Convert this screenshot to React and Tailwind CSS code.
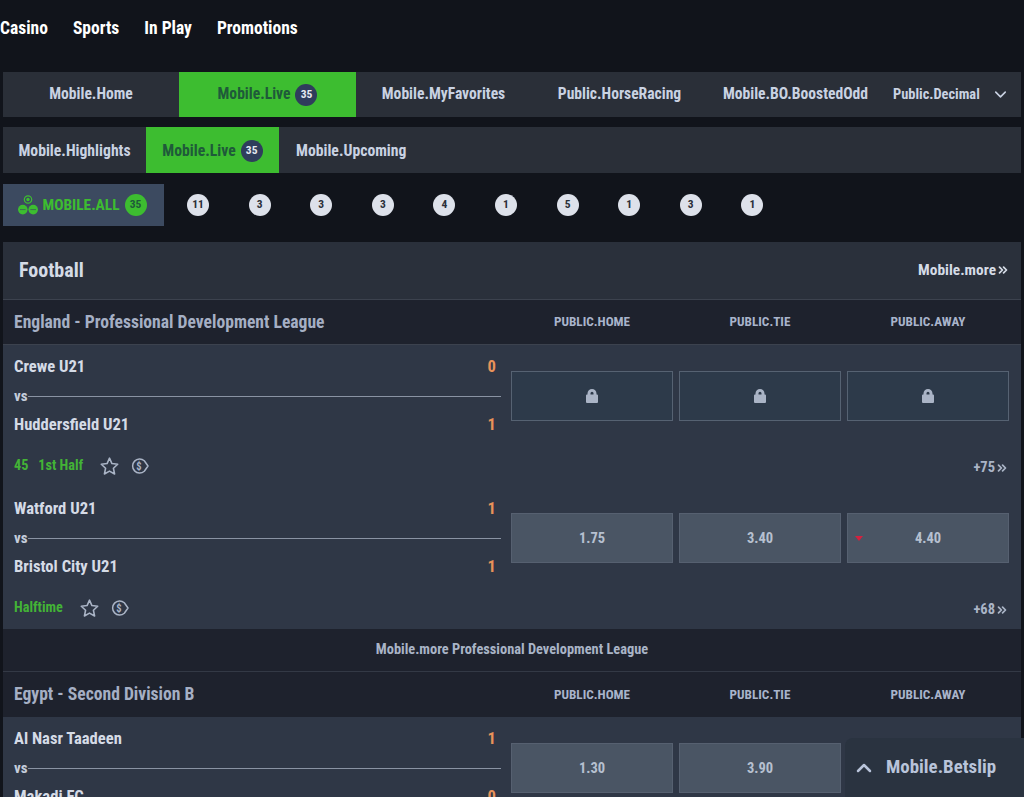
import { ChevronDown, ChevronUp, ChevronsRight } from "lucide-react"

const cond = "font-['Roboto',sans-serif] font-bold [font-stretch:75%]"

function Count() {
    return (
        <span className="w-[22px] h-[22px] rounded-full flex items-center justify-center text-[11.5px] bg-[#2f3d5c] text-[#e4e8f0]">35</span>
    )
}

function Tab({ label, active, count, className }) {
    return (
        <div className={`flex items-center justify-center gap-[5px] ${active ? "bg-[#3dbd30] text-[#1f5a3a]" : "text-[#c9d2e2]"} ${className}`}>
            {label}
            {count && <Count />}
        </div>
    )
}

function Star() {
    return (
        <svg width="19" height="18" viewBox="0 0 24 23" fill="none" stroke="#aab4c6" strokeWidth="2" strokeLinejoin="round">
            <path d="M12 1.5l3.1 6.9 7.4.9-5.5 5.1 1.5 7.3-6.5-3.7-6.5 3.7 1.5-7.3-5.5-5.1 7.4-.9z" />
        </svg>
    )
}

function CashOut() {
    return (
        <svg width="18" height="16" viewBox="0 0 18 16" fill="none" stroke="#aab4c6" strokeWidth="1.5">
            <path d="M13.3 2.8A7 7 0 1 0 13.3 13.2L17 8z" strokeLinejoin="round" />
            <text x="8" y="11.8" textAnchor="middle" fontSize="10.5" fontWeight="700" fill="#aab4c6" stroke="none" fontFamily="Roboto">$</text>
        </svg>
    )
}

function Lock() {
    return (
        <svg width="12" height="14" viewBox="0 0 12 14" fill="#aab4c6">
            <path fillRule="evenodd" d="M1.5 5.5V4.5a4.5 4.5 0 0 1 9 0v1h.5a1 1 0 0 1 1 1V13a1 1 0 0 1-1 1H1a1 1 0 0 1-1-1V6.5a1 1 0 0 1 1-1zm3 0h3V4.2a1.5 1.5 0 0 0-3 0z" />
        </svg>
    )
}

function AllIcon() {
    return (
        <svg width="20" height="20" viewBox="0 0 20 20" fill="#3dbd30">
            <circle cx="10" cy="4.5" r="3.7" fill="none" stroke="#3dbd30" strokeWidth="1.2" />
            <circle cx="10" cy="4.5" r="1.7" />
            <circle cx="4.8" cy="14.6" r="4.8" />
            <circle cx="15.2" cy="14.6" r="4.8" />
            <path d="M2 14.6h5.6M12.4 14.6h5.6" stroke="#3c4a60" strokeWidth="0.7" />
        </svg>
    )
}

function LeagueHeader({ name, height }) {
    return (
        <div className={`${height} shrink-0 bg-[#1e222d] flex items-center`}>
            <div className="flex-1 pl-[11px] text-[17.6px] text-[#a5afc4]">{name}</div>
            <div className="w-[498px] grid grid-cols-3 gap-[6px] text-[13.2px] text-[#a9b4cb] text-center">
                <span>PUBLIC.HOME</span>
                <span>PUBLIC.TIE</span>
                <span>PUBLIC.AWAY</span>
            </div>
            <div className="w-[12px]" />
        </div>
    )
}

function Odd({ value, locked, down }) {
    return (
        <div className={`relative h-[50px] border flex items-center justify-center text-[14.5px] text-[#b6c0d0] ${locked ? "bg-[#2d3a4a] border-[#566272]" : "bg-[#4a5564] border-[#566070]"}`}>
            {locked ? <Lock /> : <span className="mt-[2px]">{value}</span>}
            {down && <span className="absolute left-[7px] top-[22px] w-0 h-0 border-x-[4px] border-x-transparent border-t-[5px] border-t-[#d3213f]" />}
        </div>
    )
}

function Match({ home, away, homeScore, awayScore, status, more, odds, locked, downLast }) {
    return (
        <div className="h-[142px] bg-[#2f3746] flex shrink-0">
            <div className="w-[498px] pl-[11px] pt-[11px]">
                <div className="flex justify-between items-center h-[22px] text-[16.6px] text-[#d5dbe6]">
                    <span>{home}</span>
                    <span className="text-[#e8925a] pr-[5px]">{homeScore}</span>
                </div>
                <div className="flex items-center h-[36px] text-[15px] text-[#c5cddb]">
                    vs
                    <div className="flex-1 h-px bg-[#8a93a3]" />
                </div>
                <div className="flex justify-between items-center h-[22px] text-[16.6px] text-[#d5dbe6]">
                    <span>{away}</span>
                    <span className="text-[#e8925a] pr-[5px]">{awayScore}</span>
                </div>
                <div className="flex items-center mt-[20px] h-[20px] text-[14.2px] text-[#43b336]">
                    {status}
                    <span className="ml-[17px] flex items-center gap-[12px]">
                        <Star />
                        <CashOut />
                    </span>
                </div>
            </div>
            <div className="flex-1 pl-[10px] pr-[12px] pt-[26px]">
                <div className="grid grid-cols-3 gap-[6px]">
                    {odds.map((o, i) => (
                        <Odd key={i} value={o} locked={locked} down={downLast && i === 2} />
                    ))}
                </div>
                <div className="mt-[36px] flex items-center justify-end text-[14.5px] text-[#aab4c6]">
                    {more}
                    <ChevronsRight size={14} strokeWidth={3} />
                </div>
            </div>
        </div>
    )
}

export default function App() {
    const sportCounts = [11, 3, 3, 3, 4, 1, 5, 1, 3, 1]

    return (
        <div className={`${cond} relative h-[797px] overflow-hidden bg-[#11141b]`}>
            <nav className="h-[72px] pb-[16px] flex items-center gap-[25px] text-[17.5px] text-white">
                <span>Casino</span>
                <span>Sports</span>
                <span>In Play</span>
                <span>Promotions</span>
            </nav>

            <div className="mx-[3px] h-[45px] bg-[#2a2f38] flex text-[15.6px]">
                <Tab label="Mobile.Home" className="w-[176px]" />
                <Tab label="Mobile.Live" active count className="w-[177px]" />
                <Tab label="Mobile.MyFavorites" className="w-[175px]" />
                <Tab label="Public.HorseRacing" className="w-[177px]" />
                <Tab label="Mobile.BO.BoostedOdd" className="w-[175px]" />
                <div className="flex-1 flex items-center pl-[10px] text-[14.4px] text-[#c9d2e2]">
                    Public.Decimal
                    <ChevronDown size={19} className="ml-[11px]" />
                </div>
            </div>

            <div className="mx-[3px] mt-[10px] h-[46px] bg-[#2a2f38] flex text-[15.7px]">
                <Tab label="Mobile.Highlights" className="w-[143px] pt-[2px]" />
                <Tab label="Mobile.Live" active count className="w-[133px] pt-[2px]" />
                <Tab label="Mobile.Upcoming" className="px-[17px] pt-[2px]" />
            </div>

            <div className="ml-[3px] mt-[11px] h-[42px] flex items-center">
                <div className="w-[161px] h-full pr-[2px] bg-[#3c4a60] flex items-center justify-center gap-[4px] text-[15.4px] text-[#3dbd30]">
                    <AllIcon />
                    <span className="mt-[2px]">MOBILE.ALL</span>
                    <span className="ml-[1px] w-[22px] h-[22px] rounded-full bg-[#3dbd30] text-[#1f5a3a] text-[11.5px] flex items-center justify-center">35</span>
                </div>
                <div className="ml-[23px] flex gap-[39.6px]">
                    {sportCounts.map((n, i) => (
                        <span key={i} className="w-[22px] h-[22px] rounded-full bg-[#dde1ea] text-[#2a2f38] text-[11.5px] flex items-center justify-center">{n}</span>
                    ))}
                </div>
            </div>

            <section className="mx-[3px] mt-[16px] flex flex-col">
                <div className="h-[58px] pb-[2px] bg-[#2a303b] border-b border-[#3c424e] flex items-center justify-between pl-[16px] pr-[11px] shrink-0">
                    <span className="text-[20px] text-[#d5dbe6]">Football</span>
                    <span className="mt-[2px] flex items-center text-[15.4px] text-[#d5dbe6]">
                        Mobile.more
                        <ChevronsRight size={14} strokeWidth={3} />
                    </span>
                </div>
                <LeagueHeader name="England - Professional Development League" height="h-[44px]" />
                <div className="h-px bg-[#3c424e]" />
                <Match home="Crewe U21" away="Huddersfield U21" homeScore="0" awayScore="1" status={<span className="flex gap-[10px]"><span>45</span><span>1st Half</span></span>} more="+75" odds={["", "", ""]} locked />
                <Match home="Watford U21" away="Bristol City U21" homeScore="1" awayScore="1" status="Halftime" more="+68" odds={["1.75", "3.40", "4.40"]} downLast />
                <div className="h-[43px] shrink-0 bg-[#1e222d] border-b border-[#333945] flex items-center justify-center text-[14.4px] text-[#a9b4c6]">
                    Mobile.more Professional Development League
                </div>
                <LeagueHeader name="Egypt - Second Division B" height="h-[45px]" />
                <Match home="Al Nasr Taadeen" away="Makadi FC" homeScore="1" awayScore="0" status="" more="" odds={["1.30", "3.90", ""]} />
            </section>

            <div className="absolute right-0 bottom-0 w-[179px] h-[59px] bg-[#2a3340] rounded-tl-[8px] flex items-center pl-[7px] gap-[10px] text-[18.9px] text-[#b9c4da]">
                <ChevronUp size={24} strokeWidth={2.5} />
                Mobile.Betslip
            </div>
        </div>
    )
}
